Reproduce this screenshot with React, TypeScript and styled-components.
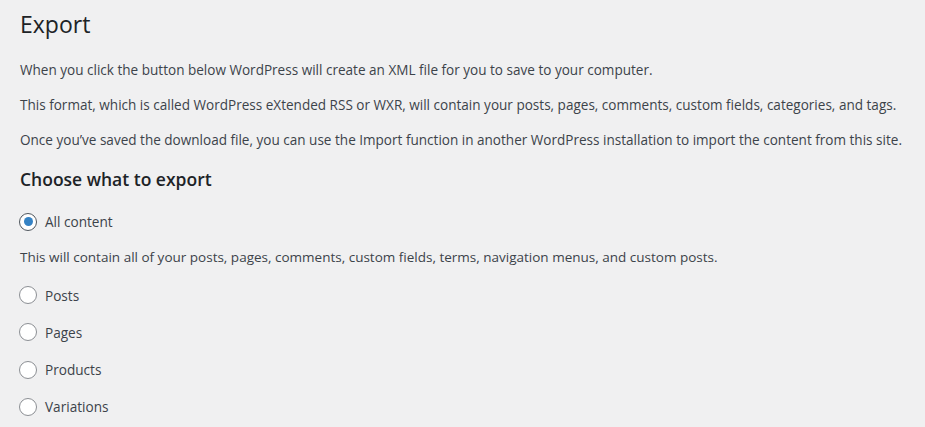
import React, { useState } from "react";
import styled, { createGlobalStyle } from "styled-components";

const GlobalStyle = createGlobalStyle`
    html, body {
        margin: 0;
        padding: 0;
        background: #f0f0f1;
    }
    body {
        font-family: "Open Sans", "Noto Sans", "Liberation Sans", sans-serif;
        color: #3c434a;
        font-size: 14px;
    }
`;

const Wrap = styled.div`
    padding: 9px 20px 0 20px;
`;

const PageTitle = styled.h1`
    font-size: 23px;
    font-weight: 400;
    line-height: 30px;
    margin: 0 0 21px 0;
    color: #1d2327;
`;

const Text = styled.p`
    font-size: 13.55px;
    line-height: 21px;
    margin: 0 0 14px 0;
`;

const SectionTitle = styled.h2`
    font-size: 17.5px;
    font-weight: 600;
    line-height: 25px;
    margin: 16px 0 19px 0;
    color: #1d2327;
`;

const Options = styled.ul`
    list-style: none;
    margin: 0;
    padding: 0;
    display: flex;
    flex-direction: column;
    gap: 16.3px;
`;

const Option = styled.li`
    line-height: 21px;
    font-size: 13.6px;
`;

const Hint = styled.p`
    font-size: 13.5px;
    line-height: 21px;
    margin: -1px 0 0 0;
`;

const RadioLabel = styled.label`
    display: flex;
    align-items: center;
    gap: 8px;
    cursor: pointer;
`;

const Radio = styled.span<{ $checked: boolean }>`
    box-sizing: border-box;
    width: 18px;
    height: 18px;
    margin-left: -1px;
    border-radius: 50%;
    border: 1px solid ${p => (p.$checked ? "#50575e" : "#8c8f94")};
    background: #fff;
    display: flex;
    align-items: center;
    justify-content: center;

    &::after {
        content: "";
        width: 9px;
        height: 9px;
        border-radius: 50%;
        background: #3582c4;
        display: ${p => (p.$checked ? "block" : "none")};
    }
`;

const HiddenInput = styled.input`
    position: absolute;
    opacity: 0;
    width: 0;
    height: 0;
`;

const choices = [
    { id: "all", label: "All content" },
    { id: "posts", label: "Posts" },
    { id: "pages", label: "Pages" },
    { id: "products", label: "Products" },
    { id: "variations", label: "Variations" },
];

export default function App() {
    const [selected, setSelected] = useState("all");

    const renderChoice = (c: { id: string; label: string }) => (
        <Option key={c.id}>
            <RadioLabel>
                <HiddenInput
                    type="radio"
                    name="content"
                    checked={selected === c.id}
                    onChange={() => setSelected(c.id)}
                />
                <Radio $checked={selected === c.id} />
                {c.label}
            </RadioLabel>
        </Option>
    );

    return (
        <>
            <GlobalStyle />
            <Wrap>
                <PageTitle>Export</PageTitle>
                <Text>When you click the button below WordPress will create an XML file for you to save to your computer.</Text>
                <Text>This format, which is called WordPress eXtended RSS or WXR, will contain your posts, pages, comments, custom fields, categories, and tags.</Text>
                <Text>Once you’ve saved the download file, you can use the Import function in another WordPress installation to import the content from this site.</Text>
                <SectionTitle>Choose what to export</SectionTitle>
                <Options>
                    {renderChoice(choices[0])}
                    <Hint>This will contain all of your posts, pages, comments, custom fields, terms, navigation menus, and custom posts.</Hint>
                    {choices.slice(1).map(renderChoice)}
                </Options>
            </Wrap>
        </>
    );
}
